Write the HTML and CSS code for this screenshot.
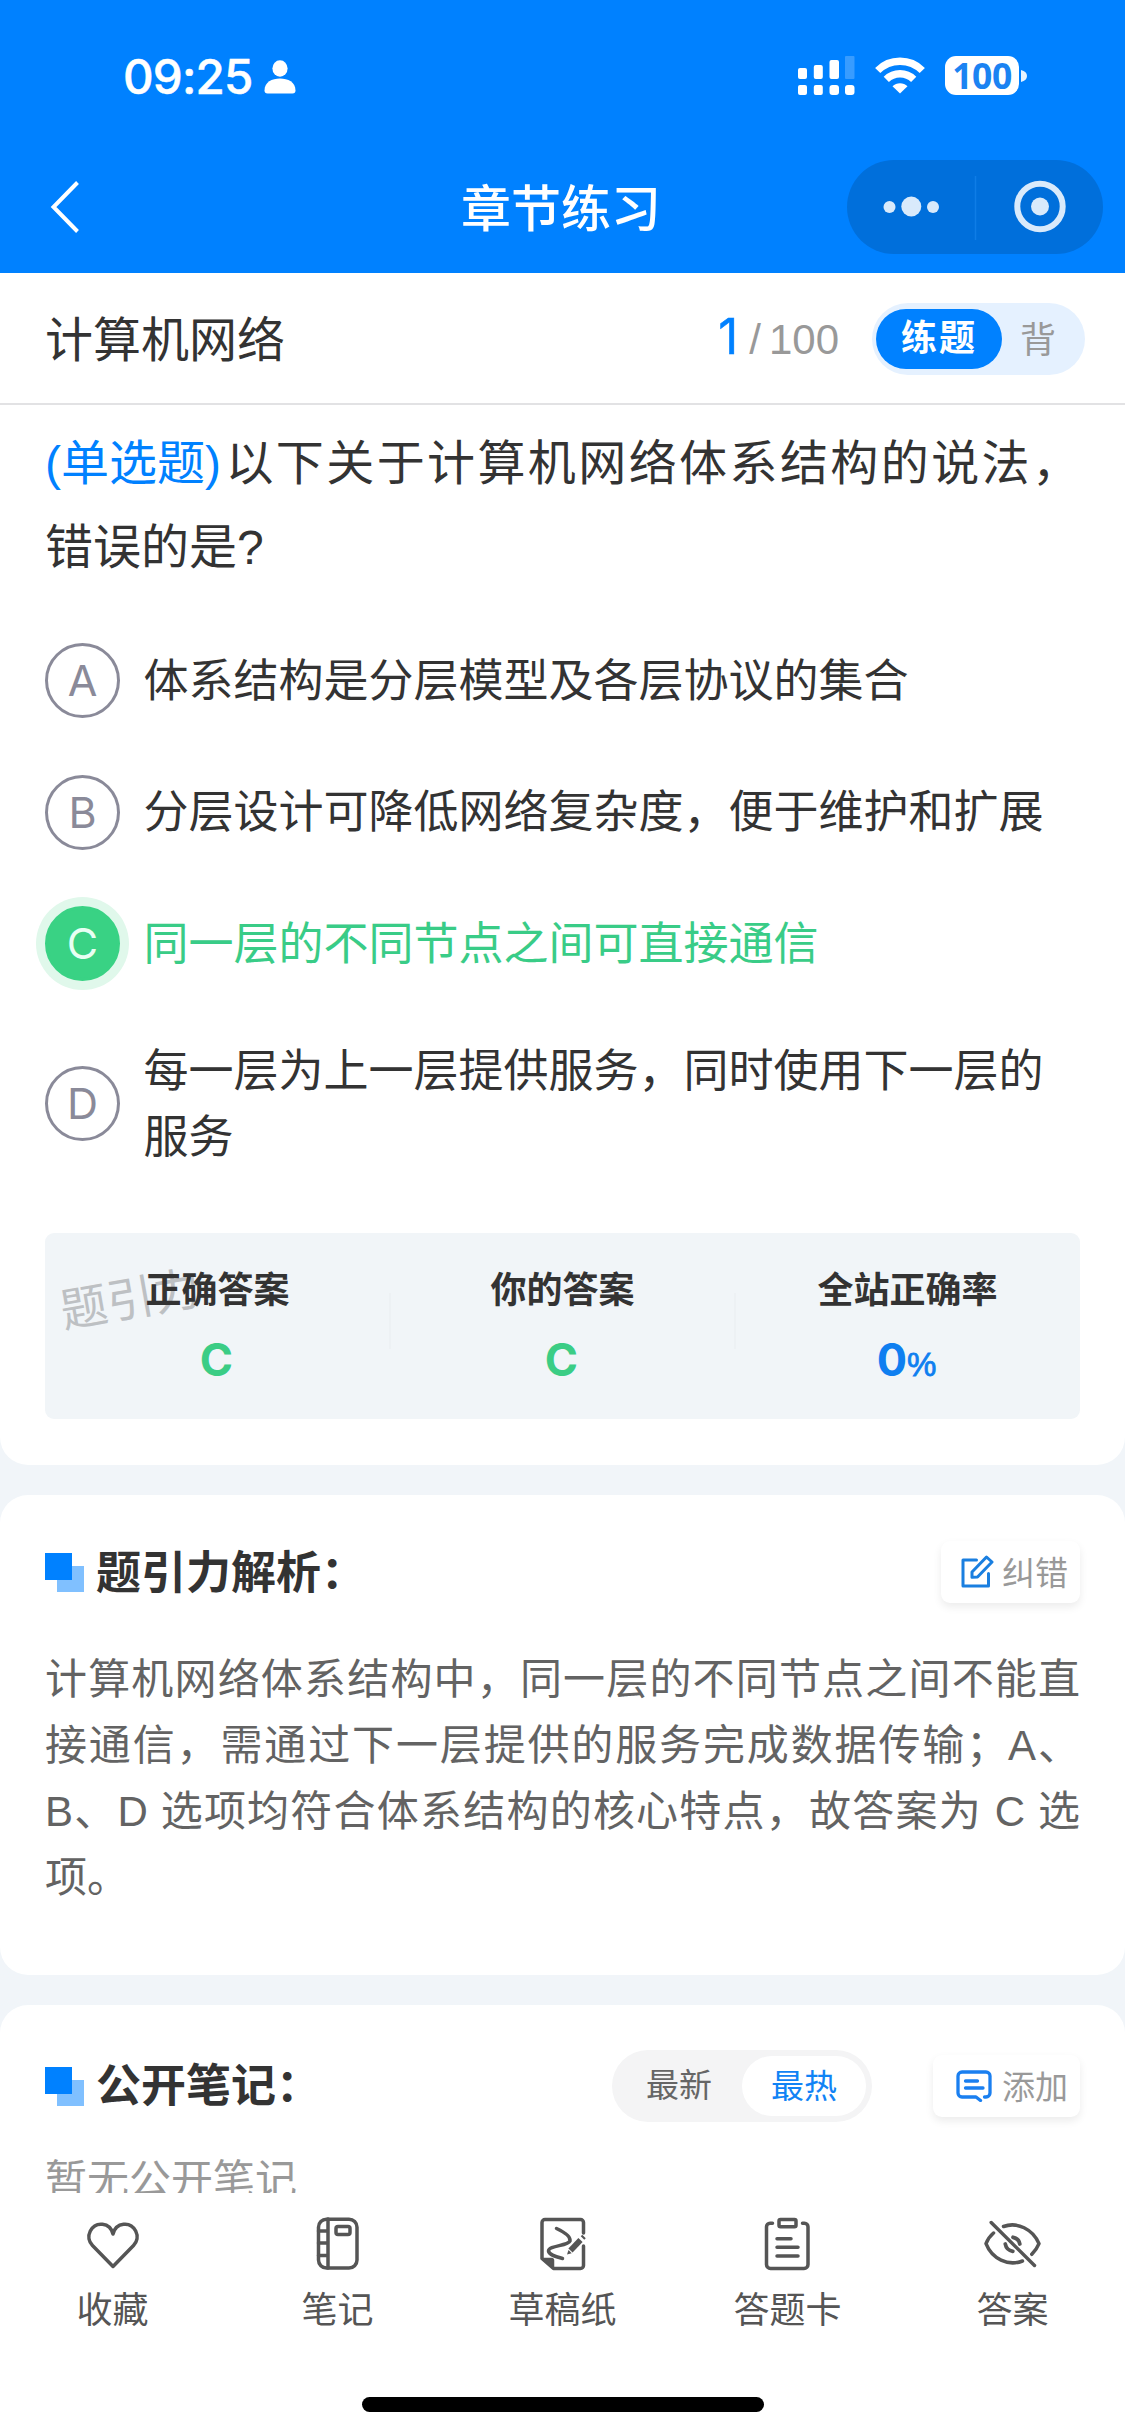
FILE: index.html
```html
<!DOCTYPE html>
<html lang="zh-CN">
<head>
<meta charset="utf-8">
<title>章节练习</title>
<link rel="stylesheet" href="styles.css">
</head>
<body>
<div class="app">
  <header class="header">
    <div class="status">
      <div class="status-left">
        <span class="time">09:25</span>
        <svg class="person" width="32" height="34" viewBox="0 0 32 34" fill="#fff"><ellipse cx="16" cy="8.5" rx="7.6" ry="8.3"/><path d="M0.5 30.5C0.500 22 8 18.500 16 18.500s15.500 3.500 15.500 12c0 2-1 3-3 3h-25c-2 0-3-1-3-3z"/></svg>
      </div>
      <div class="status-right">
        <svg width="57" height="40" viewBox="0 0 57 40" fill="#fff">
          <rect x="0" y="12" width="9" height="11" rx="2"/><rect x="15.800" y="9" width="9" height="14" rx="2"/><rect x="31.500" y="4" width="9.500" height="19" rx="2"/><rect x="47" y="0" width="9.500" height="23" rx="1" opacity=".22"/>
          <rect x="0" y="29" width="9" height="10" rx="2"/><rect x="15.800" y="29" width="9" height="10" rx="2"/><rect x="31.500" y="29" width="9.500" height="10" rx="3"/><rect x="47" y="29" width="9.500" height="10" rx="3"/>
        </svg>
        <svg class="wifi" width="50" height="37" viewBox="0 0 50 37" fill="none" stroke="#fff" stroke-width="7.400">
          <path d="M2.700 13.500A31.500 31.500 0 0 1 47.300 13.500"/><path d="M11.300 22.300A19.500 19.500 0 0 1 38.700 22.300"/><path d="M25 36.500L17.500 29.200C21.500 25.200 28.500 25.200 32.500 29.200Z" fill="#fff" stroke="none"/>
        </svg>
        <span class="battery">100</span>
        <svg class="nub" width="6" height="12" viewBox="0 0 6 12" fill="#e6f3ff"><path d="M0 0C4 1 6 3 6 6S4 11 0 12z"/></svg>
      </div>
    </div>
    <div class="nav">
      <svg class="back" width="30" height="54" viewBox="0 0 30 54" fill="none" stroke="#fff" stroke-width="4"><path d="M27.500 2.500L3.500 27L27.500 51.500"/></svg>
      <h1 class="nav-title">章节练习</h1>
      <div class="capsule">
        <svg width="256" height="94" viewBox="0 0 256 94" fill="#d9eafb">
          <circle cx="42.500" cy="47" r="6"/><circle cx="64.300" cy="46.500" r="10"/><circle cx="86" cy="47" r="6"/>
          <path d="M128.500 16v64" stroke="#0f7de6" stroke-width="1.500"/>
          <circle cx="193" cy="46.500" r="22.700" fill="none" stroke="#d9eafb" stroke-width="6"/><circle cx="193" cy="46.500" r="9"/>
        </svg>
      </div>
    </div>
  </header>

  <div class="chapter">
    <span class="chapter-name">计算机网络</span>
    <div class="progress"><span class="current">1</span><span class="slash">/</span><span>100</span></div>
    <div class="mode"><span class="mode-on">练题</span><span class="mode-off">背</span></div>
  </div>

  <main class="content">
    <section class="card question">
      <p class="stem"><span class="kind">(单选题)</span>以下关于计算机网络体系结构的说法，错误的是?</p>
      <ul class="options">
        <li class="option"><span class="letter">A</span><span class="text">体系结构是分层模型及各层协议的集合</span></li>
        <li class="option"><span class="letter">B</span><span class="text">分层设计可降低网络复杂度，便于维护和扩展</span></li>
        <li class="option correct"><span class="letter">C</span><span class="text">同一层的不同节点之间可直接通信</span></li>
        <li class="option"><span class="letter">D</span><span class="text">每一层为上一层提供服务，同时使用下一层的服务</span></li>
      </ul>
      <div class="stats">
        <span class="watermark">题引力</span>
        <div class="stat"><span class="label">正确答案</span><span class="value">C</span></div>
        <div class="stat"><span class="label">你的答案</span><span class="value">C</span></div>
        <div class="stat"><span class="label">全站正确率</span><span class="value rate">0<small>%</small></span></div>
      </div>
    </section>

    <section class="card analysis">
      <div class="section-head">
        <svg class="mark" width="40" height="40" viewBox="0 0 40 40"><rect x="12" y="13" width="27" height="26" fill="#80c0ff"/><rect width="27" height="27" fill="#0081ff"/></svg>
        <h2>题引力解析：</h2>
        <button class="chip">
          <svg width="34" height="34" viewBox="0 0 34 34" fill="none" stroke="#1a7fe0" stroke-width="3" stroke-linejoin="round" stroke-linecap="round"><path d="M15.500 5H2v26h25.500V18.500"/><path d="M11 22.300V17L25.500 2L31 7L16.500 22Z"/></svg>
          <span>纠错</span>
        </button>
      </div>
      <p class="explain">计算机网络体系结构中，同一层的不同节点之间不能直接通信，需通过下一层提供的服务完成数据传输；A、B、D 选项均符合体系结构的核心特点，故答案为 C 选项。</p>
    </section>

    <section class="card notes">
      <div class="section-head">
        <svg class="mark" width="40" height="40" viewBox="0 0 40 40"><rect x="12" y="13" width="27" height="26" fill="#80c0ff"/><rect width="27" height="27" fill="#0081ff"/></svg>
        <h2>公开笔记：</h2>
        <div class="sort"><span>最新</span><span class="sort-on">最热</span></div>
        <button class="chip add">
          <svg width="36" height="32" viewBox="0 0 36 32" fill="none" stroke="#1a7ff0" stroke-width="3.300" stroke-linejoin="round" stroke-linecap="round"><path d="M28.500 27H30a4 4 0 0 0 4-4V6a4 4 0 0 0-4-4H6a4 4 0 0 0-4 4v17a4 4 0 0 0 4 4h14l4.500 3.500"/><path d="M9.500 11h12M9.500 18h17.500"/></svg>
          <span>添加</span>
        </button>
      </div>
      <p class="empty">暂无公开笔记</p>
    </section>
  </main>

  <footer class="tabbar">
    <nav class="tabs">
      <a class="tab"><svg width="60" height="60" viewBox="0 0 60 60"><path d="M30 20C27 8 12.500 7 7.300 17C4.500 22.500 6 28 9.500 31.500L30 52.500L50.500 31.500C54 28 55.500 22.500 52.700 17C47.500 7 33 8 30 20Z"/></svg>收藏</a>
      <a class="tab"><svg width="60" height="60" viewBox="0 0 60 60"><rect x="10.500" y="5.200" width="38.500" height="48.800" rx="8"/><path d="M20 5v49M10.500 17H20M10.500 29H20M10.500 41.500H20"/><rect x="28" y="12.500" width="14" height="8" rx="2"/></svg>笔记</a>
      <a class="tab"><svg width="60" height="60" viewBox="0 0 60 60"><path d="M50.500 19V8.500a3 3 0 0 0-3-3H12a3 3 0 0 0-3 3V44.500L20.500 54.500H47.500a3 3 0 0 0 3-3V32"/><path d="M9 44.500h9.500q2 0 2 2v8z" fill="#555" stroke-width="1.500"/><path d="M23.500 14.500C31 18 38 22 37 27C35 32 15.500 31.500 15.500 37C16 41 24 43 29.500 44.500"/><path d="M37.500 36.500L47.500 26" stroke-width="5.800" stroke-linecap="butt"/><path d="M49.500 24l1.500-1.500" stroke-width="5" stroke-linecap="butt"/><path d="M35.500 36l3.200 3.200-4.700 1.300z" fill="#555" stroke="none"/></svg>草稿纸</a>
      <a class="tab"><svg width="60" height="60" viewBox="0 0 60 60"><path d="M14.500 9.300H12a3.500 3.500 0 0 0-3.500 3.500V50.500a4 4 0 0 0 4 4H46a4 4 0 0 0 4-4V12.800a3.500 3.500 0 0 0-3.500-3.500H44.500M19 24.700H33M19 33.300H40M19 42H40"/><rect x="21" y="5.500" width="17" height="7.200" rx="1.500"/></svg>答题卡</a>
      <a class="tab"><svg width="60" height="60" viewBox="0 0 60 60"><path d="M8.200 8.500L51.500 51.500M20.500 12.500C34 7.500 50 15 56 29.700C54.500 33.500 52 37 48.800 40.300M10.500 19C7 22 4.500 25.500 3 29.700C9 45 25 52.500 39.500 47"/><path d="M30 23.300C33.500 24 36.200 26.500 36.800 30M22.300 30C23 33.800 26 36.700 29.800 37.300" stroke-width="3.800"/></svg>答案</a>
    </nav>
    <div class="home"></div>
  </footer>
</div>
</body>
</html>
```

FILE: styles.css
```css
* { box-sizing: border-box; margin: 0; padding: 0; }

body {
  width: 1125px;
  font-family: "Liberation Sans", "Noto Sans CJK SC", sans-serif;
  color: #333;
  background: #f1f5f9;
  text-spacing-trim: space-all;
}

svg { display: block; flex: none; }

.app { display: flex; flex-direction: column; height: 2436px; overflow: hidden; }

/* Header */
.header { flex: none; height: 273px; background: #0081ff; color: #fff; }
.status { display: flex; justify-content: space-between; height: 141px; padding: 56px 98px 0 123px; }
.status-left { display: flex; align-items: flex-start; gap: 11px; }
.time { font: 500 47.500px/42px Inter, sans-serif; letter-spacing: -0.8px; width: 130px; white-space: nowrap; -webkit-text-stroke: 0.5px; }
.person { margin-top: 4px; }
.status-right { display: flex; align-items: flex-start; }
.wifi { margin: 1px 20px 0; }
.battery {
  width: 74px; height: 39px; border-radius: 11px; background: #fff; color: #1b83f2;
  font: 700 35.500px/39px "Noto Sans", sans-serif; letter-spacing: -0.5px; text-align: center;
}
.nub { margin: 14px 0 0 2px; }
.nav { display: grid; grid-template-columns: 1fr auto 1fr; align-items: center; height: 132px; padding: 0 22px; }
.back { margin-left: 28px; }
.nav-title { font-size: 50px; line-height: 70px; font-weight: 500; margin: 5px 3px 0 0; }
.capsule { justify-self: end; width: 256px; height: 94px; border-radius: 47px; background: #006fdb; }

/* Chapter bar */
.chapter {
  display: flex; align-items: center; flex: none; height: 132px; padding: 0 40px 0 45px;
  background: #fff; border-bottom: 2px solid #e2e2e4;
}
.chapter-name { flex: 1; margin-top: -4px; font-size: 48px; }
.progress { display: flex; align-items: baseline; font-size: 42px; color: #999; margin: -3px 33px 0 0; }
.current { font: 400 49px Inter, sans-serif; color: #0081ff; -webkit-text-stroke: 0.5px; }
.slash { margin: 0 8px 0 11px; }
.mode { display: flex; align-items: center; width: 213px; height: 72px; margin-top: 2px; padding-left: 4px; border-radius: 36px; background: #e5f1ff; font-size: 36px; }
.mode-on { width: 126px; height: 60px; line-height: 60px; border-radius: 30px; background: #0081ff; color: #fff; font-weight: 700; letter-spacing: 2px; text-align: center; }
.mode-off { margin: -5px 0 0 18px; color: #999; }

/* Cards */
.content { flex: 1; min-height: 0; overflow: hidden; display: flex; flex-direction: column; gap: 30px; }
.card { flex: none; background: #fff; border-radius: 28px; padding: 0 45px; }
.question { height: 1060px; border-radius: 0 0 28px 28px; padding-top: 17px; }
.stem { height: 168px; font-size: 48px; line-height: 84px; text-align: justify; }
.kind { display: inline-block; line-height: 60px; color: #0081ff; margin-right: 2px; }

.options { list-style: none; display: flex; flex-direction: column; gap: 56.500px; margin-top: 53px; }
.option { display: flex; align-items: center; gap: 23.500px; font-size: 45px; line-height: 66px; }
.text { margin: 1px 0 -1px; }
.letter {
  flex: none; width: 75px; height: 75px; border: 3px solid #8a8a99; border-radius: 50%;
  font: 400 43px/69px Inter, sans-serif; text-align: center; color: #8a8a99;
}
.correct { color: #39cc87; }
.correct .letter { border-color: #39d284; background: #39d284; color: #e8fff3; box-shadow: 0 0 0 9px #e0f8eb; }

.stats { position: relative; display: flex; height: 186px; margin-top: 63px; padding-top: 32px; border-radius: 9px; background: #f1f5f8; }
.stat { position: relative; flex: 1; display: flex; flex-direction: column; align-items: center; }
.stat + .stat::before { content: ""; position: absolute; left: -1px; top: 28px; width: 2px; height: 56px; background: #edf1f4; }
.label { font-size: 36px; line-height: 52px; font-weight: 700; }
.value { margin: 17px 2px 0 0; font: 700 45px/52px Inter, sans-serif; color: #3bcd85; }
.rate { color: #0f7ff0; }
.rate small { font: 500 33px "Liberation Sans", sans-serif; -webkit-text-stroke: 0.8px; }
.watermark { position: absolute; left: 15px; top: 35px; font-size: 47px; line-height: 64px; color: #bdc0c3; transform: rotate(-10deg); }

.section-head { display: flex; align-items: center; height: 64px; }
.mark { margin-top: 1px; }
.section-head h2 { flex: 1; margin-left: 11px; padding-top: 3px; font-size: 45px; line-height: 64px; font-weight: 700; }
.chip {
  display: flex; align-items: center; gap: 7px; height: 62px; padding: 0 12px 0 20px;
  border: 0; border-radius: 9px; background: #fff; box-shadow: 0 4px 9px rgba(0, 0, 0, .08);
  font: 33px "Liberation Sans", "Noto Sans CJK SC", sans-serif; color: #999;
}
.chip span { margin-top: -2px; }
.analysis { height: 480px; padding-top: 45px; }
.explain { margin-top: 42.500px; font-size: 42px; line-height: 66px; color: #636363; text-align: justify; }

.notes { height: 400px; padding-top: 49px; }
.notes h2 { padding-top: 1px; }
.sort { display: flex; align-items: center; width: 260px; height: 72px; padding: 0 6px 0 34px; margin-right: 61px; border-radius: 36px; background: #f4f4f5; font-size: 33px; line-height: 62px; color: #666; justify-content: space-between; }
.sort-on { width: 124px; height: 60px; text-align: center; border-radius: 30px; background: #fff; color: #1183f5; }
.add { padding-left: 23px; gap: 10px; }
.empty { margin-top: 30px; font-size: 42px; line-height: 66px; color: #999; }

/* Bottom bar */
.tabbar { flex: none; height: 243px; background: #fff; padding-top: 21px; }
.tabs { display: flex; }
.tab { flex: 1; display: flex; flex-direction: column; align-items: center; gap: 11px; font-size: 36px; line-height: 52px; color: #555; }
.tab svg { fill: none; stroke: #555; stroke-width: 3.500; stroke-linecap: round; stroke-linejoin: round; }
.home { width: 402px; height: 15px; margin: 60px auto 0; border-radius: 8px; background: #000; }
```
